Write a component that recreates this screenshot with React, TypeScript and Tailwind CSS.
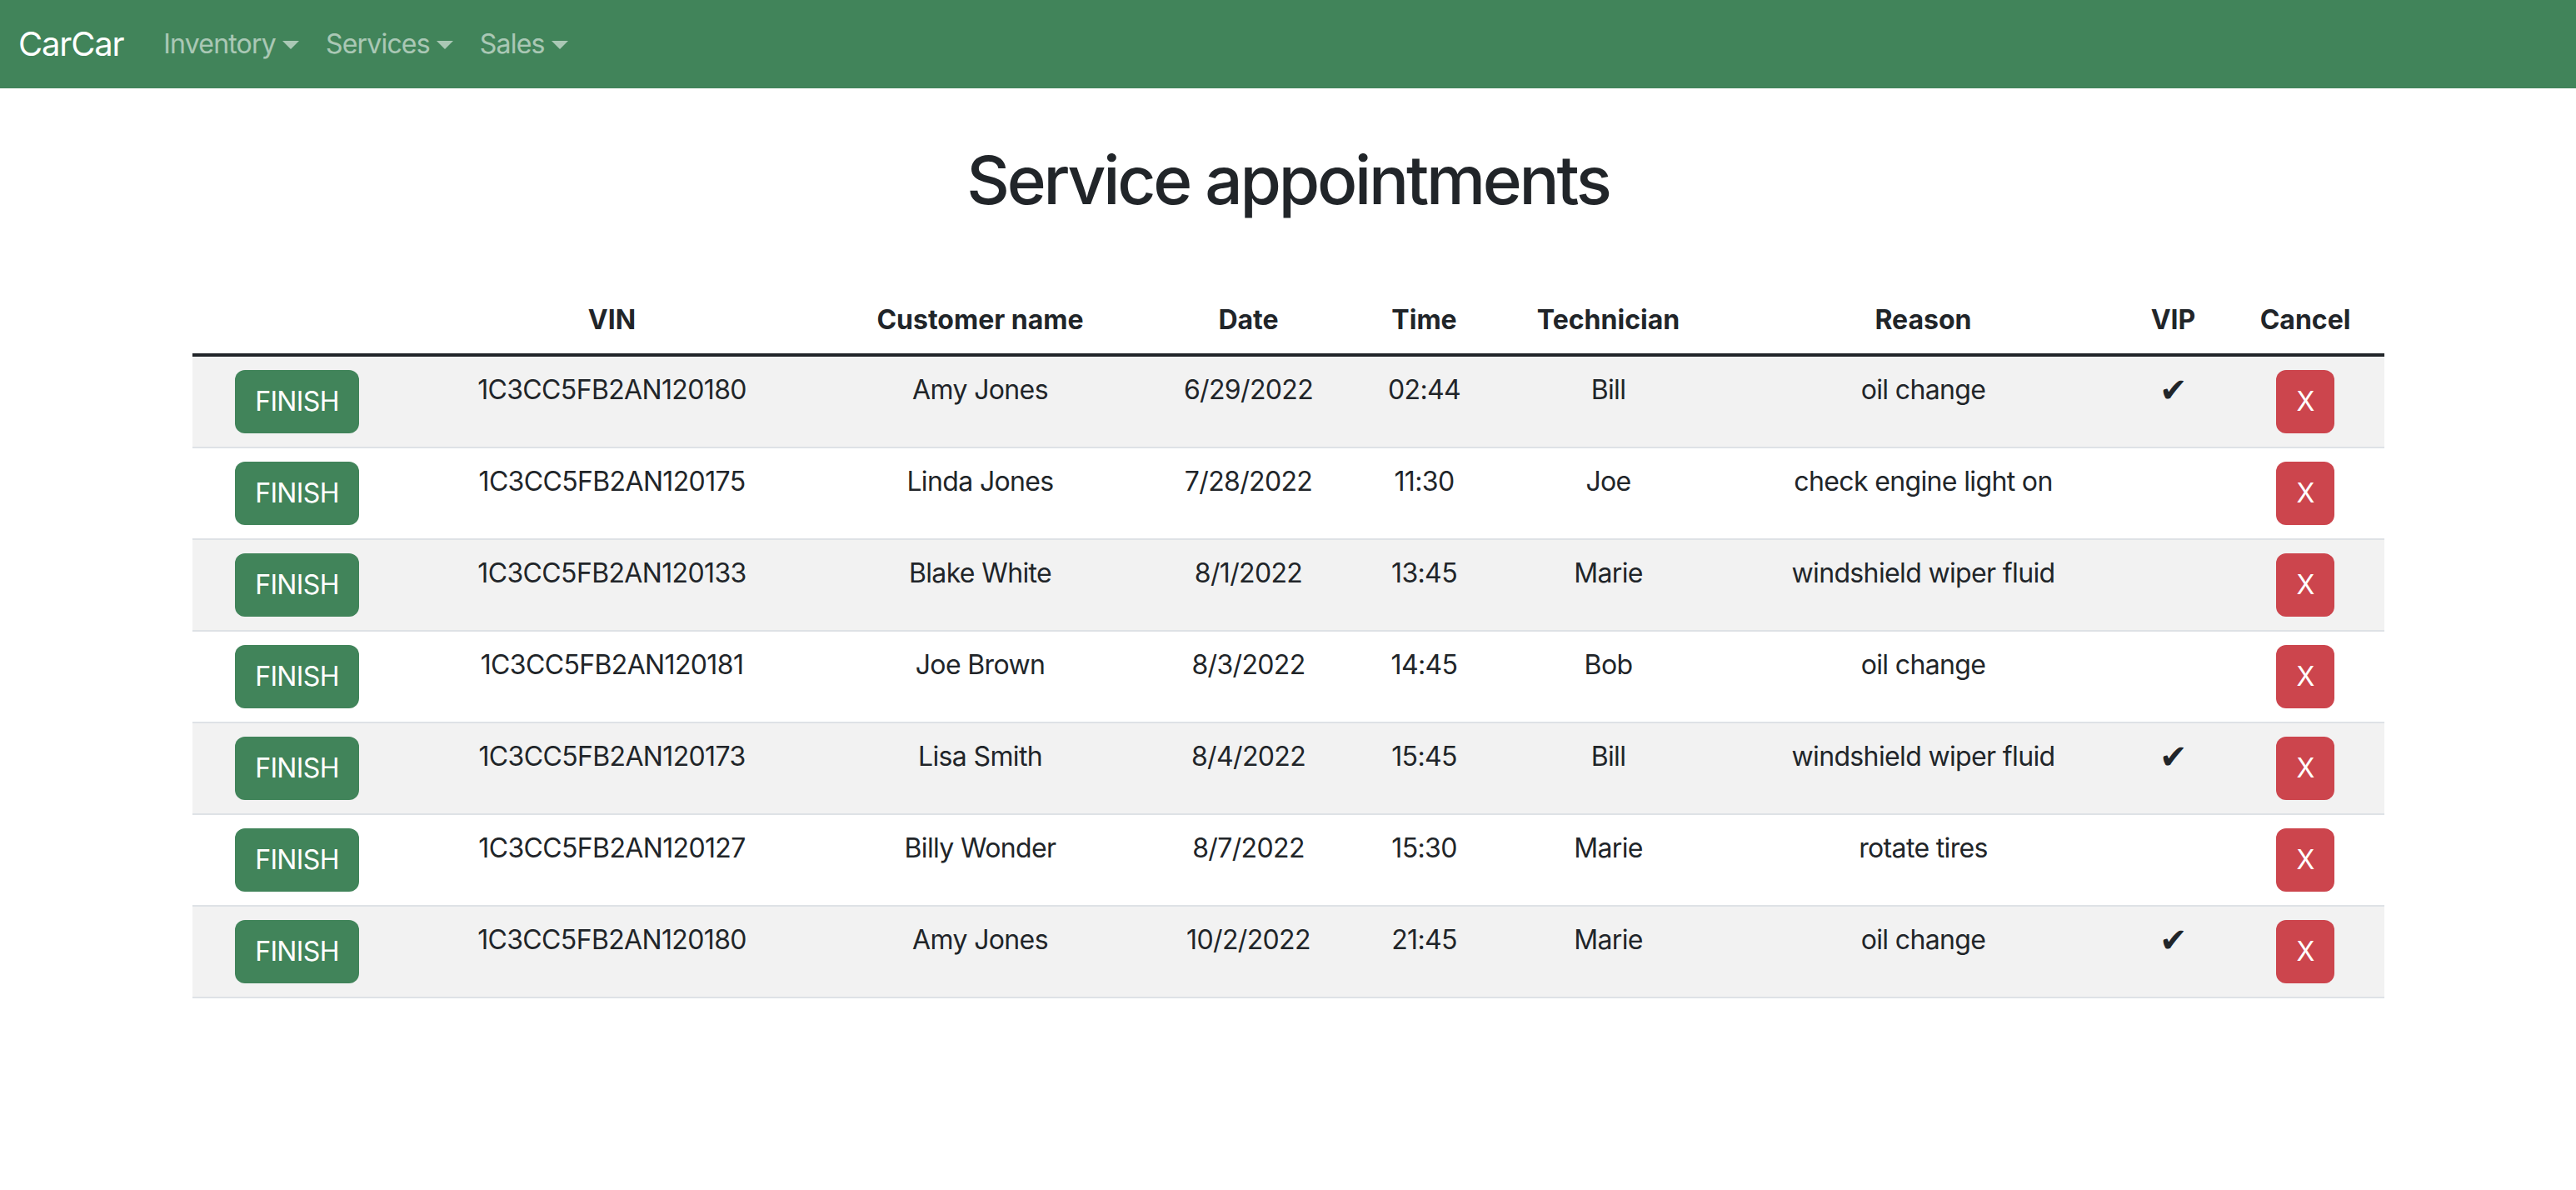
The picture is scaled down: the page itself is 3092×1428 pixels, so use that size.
import React from "react";

const appointments = [
  { vin: "1C3CC5FB2AN120180", customer: "Amy Jones", date: "6/29/2022", time: "02:44", tech: "Bill", reason: "oil change", vip: true },
  { vin: "1C3CC5FB2AN120175", customer: "Linda Jones", date: "7/28/2022", time: "11:30", tech: "Joe", reason: "check engine light on", vip: false },
  { vin: "1C3CC5FB2AN120133", customer: "Blake White", date: "8/1/2022", time: "13:45", tech: "Marie", reason: "windshield wiper fluid", vip: false },
  { vin: "1C3CC5FB2AN120181", customer: "Joe Brown", date: "8/3/2022", time: "14:45", tech: "Bob", reason: "oil change", vip: false },
  { vin: "1C3CC5FB2AN120173", customer: "Lisa Smith", date: "8/4/2022", time: "15:45", tech: "Bill", reason: "windshield wiper fluid", vip: true },
  { vin: "1C3CC5FB2AN120127", customer: "Billy Wonder", date: "8/7/2022", time: "15:30", tech: "Marie", reason: "rotate tires", vip: false },
  { vin: "1C3CC5FB2AN120180", customer: "Amy Jones", date: "10/2/2022", time: "21:45", tech: "Marie", reason: "oil change", vip: true },
];

function NavDropdown({ label }: { label: string }) {
  return (
    <a className="flex items-center px-4 text-[32px] leading-[48px] tracking-[-0.025em] text-white/55 cursor-pointer">
      {label}
      <span className="ml-2 mt-[2px] w-0 h-0 border-l-[10px] border-r-[10px] border-t-[10px] border-l-transparent border-r-transparent border-t-white/55" />
    </a>
  );
}

function Nav() {
  return (
    <nav className="h-[106px] bg-[#41845a] flex items-center px-[22px]">
      <a className="text-[40px] leading-[60px] tracking-[-0.03em] text-white mr-[32px]">CarCar</a>
      <div className="flex items-center">
        <NavDropdown label="Inventory" />
        <NavDropdown label="Services" />
        <NavDropdown label="Sales" />
      </div>
    </nav>
  );
}

export default function App() {
  return (
    <div className="min-h-screen bg-white text-[#212529] font-['Inter','Liberation_Sans',sans-serif]">
      <Nav />
      <div className="w-[2631px] mx-auto">
        <h1 className="mt-[62px] mb-[80px] text-center text-[80px] leading-[96px] font-medium tracking-[-0.04em]">
          Service appointments
        </h1>
        <table className="w-full table-fixed border-collapse text-[32px] leading-[48px]">
          <thead>
            <tr className="border-b-4 border-[#212529]">
              <th className="w-[252px] p-4"></th>
              <th className="w-[504px] p-4 font-bold">VIN</th>
              <th className="w-[380px] p-4 font-bold">Customer name</th>
              <th className="w-[264px] p-4 font-bold">Date</th>
              <th className="w-[158px] p-4 font-bold">Time</th>
              <th className="w-[284px] p-4 font-bold">Technician</th>
              <th className="w-[472px] p-4 font-bold">Reason</th>
              <th className="w-[128px] p-4 font-bold">VIP</th>
              <th className="w-[189px] p-4 font-bold">Cancel</th>
            </tr>
          </thead>
          <tbody>
            {appointments.map((a, i) => (
              <tr
                key={i}
                className={`border-b-2 border-[#dee2e6] text-center align-top tracking-[-0.02em] ${i % 2 === 0 ? "bg-[#f2f2f2]" : "bg-white"}`}
              >
                <td className="p-4">
                  <button className="bg-[#41845a] text-white rounded-[12px] px-6 py-[14px] leading-[48px]">
                    FINISH
                  </button>
                </td>
                <td className="p-4">{a.vin}</td>
                <td className="p-4">{a.customer}</td>
                <td className="p-4">{a.date}</td>
                <td className="p-4">{a.time}</td>
                <td className="p-4">{a.tech}</td>
                <td className="p-4">{a.reason}</td>
                <td className="p-4 text-[40px] font-['DejaVu_Sans',sans-serif]">{a.vip ? "✔" : ""}</td>
                <td className="p-4">
                  <button className="bg-[#cc454d] text-white rounded-[12px] px-6 py-[14px] leading-[48px]">
                    X
                  </button>
                </td>
              </tr>
            ))}
          </tbody>
        </table>
      </div>
    </div>
  );
}
